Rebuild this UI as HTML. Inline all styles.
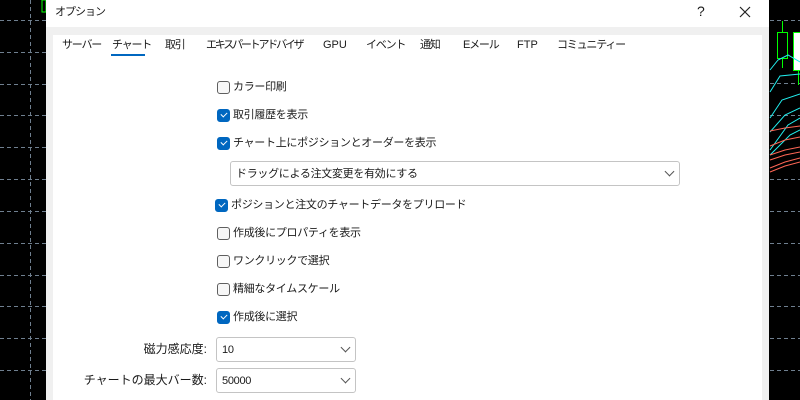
<!DOCTYPE html>
<html><head><meta charset="utf-8"><style>
*{margin:0;padding:0;box-sizing:border-box}
body{width:800px;height:400px;overflow:hidden;background:#000;position:relative;font-family:"Liberation Sans","Noto Sans CJK JP",sans-serif;font-size:11px;letter-spacing:-0.3px;color:#1a1a1a}
.abs{position:absolute}
#dlg{left:46px;top:0;width:723px;height:400px;background:#f0f0f0}
#title{left:0;top:0;width:723px;height:27px;background:#fff}
#panel{left:7px;top:35px;width:709px;height:365px;background:#fff}
.t{position:absolute;white-space:nowrap;line-height:16px}
#panel .t{letter-spacing:-1.2px}
.cb{position:absolute;width:13px;height:13px;border:1px solid #5f5f5f;border-radius:3px;background:#f7f7f7}
.cb.on{background:#0067c0;border-color:#0067c0}
.cb.on::after{content:"";position:absolute;left:3px;top:2px;width:5px;height:3px;border-left:1.2px solid #fff;border-bottom:1.2px solid #fff;transform:rotate(-45deg)}
.dd{position:absolute;border:1px solid #c4c4c4;border-radius:3px;background:#fff;height:25px}
.dd span{position:absolute;left:5px;top:4px;line-height:16px}
.dd i{position:absolute;right:6px;top:6px;width:7px;height:7px;border-right:1px solid #555;border-bottom:1px solid #555;transform:rotate(45deg)}
</style></head><body>
<svg class="abs" style="left:0;top:0" width="800" height="400">
<g stroke="#6f7f8f" stroke-dasharray="4,3" stroke-width="1">
<line x1="30.5" y1="0" x2="30.5" y2="400"/>
<line x1="0" y1="20.5" x2="46" y2="20.5"/><line x1="0" y1="52.5" x2="46" y2="52.5"/><line x1="0" y1="84.5" x2="46" y2="84.5"/><line x1="0" y1="115.5" x2="46" y2="115.5"/><line x1="0" y1="147.5" x2="46" y2="147.5"/><line x1="0" y1="179.5" x2="46" y2="179.5"/><line x1="0" y1="211.5" x2="46" y2="211.5"/><line x1="0" y1="243.5" x2="46" y2="243.5"/><line x1="0" y1="275.5" x2="46" y2="275.5"/><line x1="0" y1="306.5" x2="46" y2="306.5"/><line x1="0" y1="338.5" x2="46" y2="338.5"/><line x1="0" y1="370.5" x2="46" y2="370.5"/>
<line x1="770" y1="20.5" x2="800" y2="20.5"/><line x1="770" y1="83.5" x2="800" y2="83.5"/><line x1="770" y1="115.5" x2="800" y2="115.5"/><line x1="770" y1="179.5" x2="800" y2="179.5"/><line x1="770" y1="211.5" x2="800" y2="211.5"/><line x1="770" y1="243.5" x2="800" y2="243.5"/><line x1="770" y1="275.5" x2="800" y2="275.5"/><line x1="770" y1="306.5" x2="800" y2="306.5"/><line x1="770" y1="338.5" x2="800" y2="338.5"/><line x1="770" y1="370.5" x2="800" y2="370.5"/>
</g>
<rect x="42" y="0" width="4" height="12" fill="none" stroke="#0f0"/>
<line x1="782.5" y1="21" x2="782.5" y2="68" stroke="#0f0"/>
<rect x="777.5" y="32.5" width="10" height="26" fill="#000" stroke="#0f0"/>
<rect x="793.5" y="32.5" width="8" height="38" fill="#fff" stroke="#0f0"/>
<line x1="798.5" y1="71" x2="798.5" y2="85" stroke="#0f0"/>
<g fill="none" stroke="#2ee" stroke-width="1">
<polyline points="770,70 778,60 788,55 800,62"/>
<polyline points="770,92 780,76 800,74"/>
<polyline points="770,118 782,100 800,94"/>
<polyline points="770,132 785,115 800,108"/>
<polyline points="770,150 788,125 800,118"/>
<polyline points="770,155 790,135 800,130"/>
</g>
<g fill="none" stroke="#f65" stroke-width="1">
<polyline points="770,131 785,128 800,126"/>
<polyline points="770,146 785,140 800,137"/>
<polyline points="770,155 785,150 800,147"/>
<polyline points="770,160 785,155 800,152"/>
<polyline points="770,168 785,162 800,158"/>
<polyline points="770,172 785,166 800,162"/>
</g>
</svg>
<div id="dlg" class="abs">
<div id="title" class="abs">
<div class="t" style="left:9px;top:4px;letter-spacing:-1px">オプション</div>
<div class="t" style="left:651px;top:3px;font-size:14px">?</div>
<svg class="abs" style="left:693px;top:6px" width="12" height="12"><path d="M1 1L11 11M11 1L1 11" stroke="#222" stroke-width="1.2"/></svg>
</div>
<div id="panel" class="abs">
<div class="t" style="left:9px;top:2px">サーバー</div>
<div class="t" style="left:59px;top:2px">チャート</div>
<div class="abs" style="left:58px;top:19px;width:34px;height:2px;background:#0067c0"></div>
<div class="t" style="left:112px;top:2px">取引</div>
<div class="t" style="left:153px;top:2px;letter-spacing:-2.2px">エキスパートアドバイザ</div>
<div class="t" style="left:270px;top:2px;letter-spacing:0">GPU</div>
<div class="t" style="left:313px;top:2px">イベント</div>
<div class="t" style="left:367px;top:2px">通知</div>
<div class="t" style="left:410px;top:2px">Eメール</div>
<div class="t" style="left:464px;top:2px;letter-spacing:0">FTP</div>
<div class="t" style="left:504px;top:2px">コミュニティー</div>
</div>
</div>
<div class="cb" style="left:217px;top:81px"></div><div class="t" style="left:233px;top:79px">カラー印刷</div>
<div class="cb on" style="left:217px;top:109px"></div><div class="t" style="left:233px;top:107px">取引履歴を表示</div>
<div class="cb on" style="left:217px;top:137px"></div><div class="t" style="left:233px;top:135px">チャート上にポジションとオーダーを表示</div>
<div class="dd" style="left:230px;top:161px;width:450px"><span>ドラッグによる注文変更を有効にする</span><i></i></div>
<div class="cb on" style="left:215px;top:199px"></div><div class="t" style="left:231px;top:197px">ポジションと注文のチャートデータをプリロード</div>
<div class="cb" style="left:217px;top:227px"></div><div class="t" style="left:233px;top:225px">作成後にプロパティを表示</div>
<div class="cb" style="left:217px;top:255px"></div><div class="t" style="left:233px;top:253px">ワンクリックで選択</div>
<div class="cb" style="left:217px;top:283px"></div><div class="t" style="left:233px;top:281px">精細なタイムスケール</div>
<div class="cb on" style="left:217px;top:311px"></div><div class="t" style="left:233px;top:309px">作成後に選択</div>
<div class="t" style="right:593px;top:341px;font-size:12px;letter-spacing:0">磁力感応度:</div>
<div class="dd" style="left:216px;top:337px;width:140px"><span>10</span><i></i></div>
<div class="t" style="right:593px;top:372px;font-size:12px;letter-spacing:0">チャートの最大バー数:</div>
<div class="dd" style="left:216px;top:368px;width:140px"><span>50000</span><i></i></div>
</body></html>
